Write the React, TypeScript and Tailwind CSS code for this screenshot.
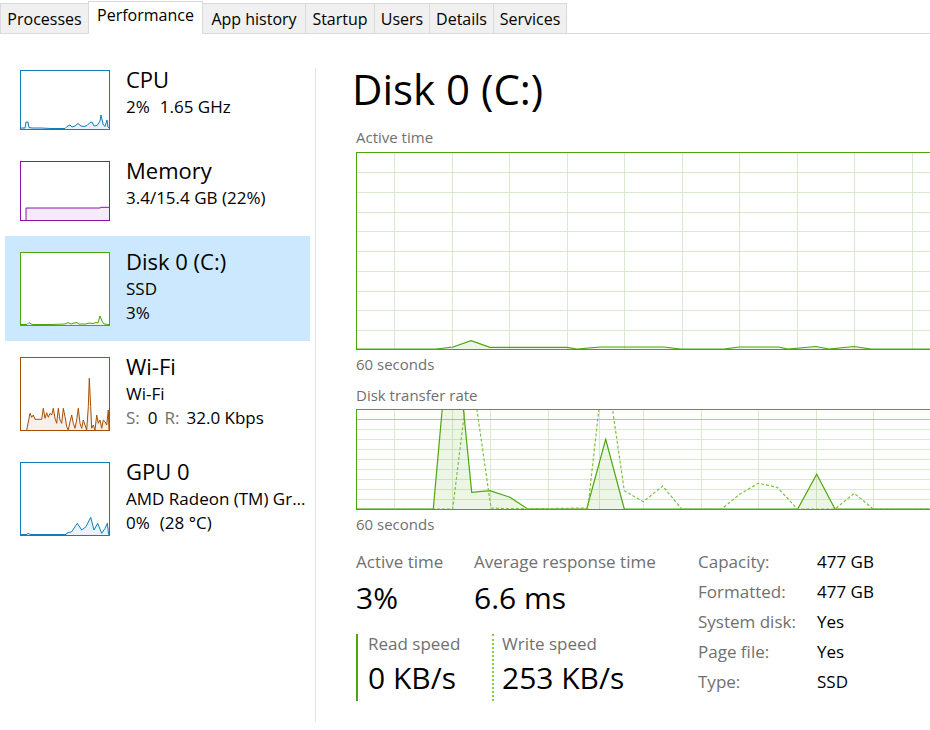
import React from 'react';
import clsx from 'clsx';

const tabs = [
  { label: 'Processes', w: 'w-[89px]' },
  { label: 'Performance', w: 'w-[115px]', active: true },
  { label: 'App history', w: 'w-[104px]' },
  { label: 'Startup', w: 'w-[70px]' },
  { label: 'Users', w: 'w-[56px]' },
  { label: 'Details', w: 'w-[65px]' },
  { label: 'Services', w: 'w-[74px]' },
];

const GRID = '#d9eacc';
const DISK = '#4da60c';

const MiniGraph = ({
  points,
  color,
  border,
  tall,
}: {
  points: string;
  color: string;
  border: string;
  tall?: boolean;
}) => {
  const h = tall ? 72 : 58;
  return (
    <div
      className={clsx(
        'w-[90px] shrink-0 border bg-white',
        tall ? 'h-[74px]' : 'h-[60px]',
        border
      )}
    >
      <svg
        viewBox={`0 0 88 ${h}`}
        preserveAspectRatio="none"
        className="block h-full w-full"
      >
        <polygon
          points={`0,${h} ${points} 88,${h}`}
          fill={color}
          fillOpacity={0.09}
        />
        <polyline points={points} fill="none" stroke={color} strokeWidth={1} />
      </svg>
    </div>
  );
};

const items = [
  {
    title: 'CPU',
    color: '#117dbb',
    border: 'border-[#117dbb]',
    points:
      '0,57 4,57 5,51 7,51 8,56.5 11,57 20,57 30,57.5 44,57.5 46,55.5 49,54 51,56 54,55 57,52.5 60,55 63,55.5 66,54.5 69,51.5 71,51 73,55 76,54.5 79,50 80,44 82,53 84,55.5 86,49 87,56 88,57',
    lines: [
      <>
        2%<span className="ml-[10px]">1.65 GHz</span>
      </>,
    ],
  },
  {
    title: 'Memory',
    color: '#8b12ae',
    border: 'border-[#8b12ae]',
    points: '5,58 5,46 79,46 80,45.3 88,45.3',
    lines: ['3.4/15.4 GB (22%)'],
  },
  {
    title: 'Disk 0 (C:)',
    color: '#4da60c',
    border: 'border-[#4da60c]',
    tall: true,
    selected: true,
    points:
      '0,71.5 6,71.5 8,69.5 10,71 12,71.5 30,71.5 44,71 47,69.5 50,71 53,70 56,69.5 58,71 65,71 68,70 72,70.5 75,69.5 77,70 79,63 81,68 83,71 88,71.5',
    lines: ['SSD', '3%'],
  },
  {
    title: 'Wi-Fi',
    color: '#a74f01',
    border: 'border-[#a74f01]',
    tall: true,
    points:
      '5.7,72 9,55.3 10.7,59.3 12.3,57 14,61.3 20.7,61.3 22.3,50.3 24,60.3 25.7,54.7 27.3,59.3 29,55.3 30.7,57 32.3,50.3 34,60.3 35.7,65.3 37.3,50.3 39,62 40.7,65.3 42.3,50.3 44,58.7 45.7,68.7 47.3,72 49,63.7 50.7,57 52.3,65.3 54,70.3 55.7,62 57.3,50.3 59,65.3 60.7,70.3 62.3,62 64,67 65.7,72 67.3,48.7 68.3,20.3 69.7,48.7 70.7,70.3 72.3,67 74,72 75.7,57 77.3,65.3 79,62 80.7,70.3 82.3,62 84,63.7 85.7,67 87.3,52 88,72',
    lines: [
      'Wi-Fi',
      <>
        <span className="text-[#707070]">S:</span>
        <span className="ml-[8px]">0</span>
        <span className="ml-[7px] text-[#707070]">R:</span>
        <span className="ml-[7px]">32.0 Kbps</span>
      </>,
    ],
  },
  {
    title: 'GPU 0',
    color: '#117dbb',
    border: 'border-[#117dbb]',
    tall: true,
    points:
      '0,71.5 6,71.5 7,70 9,71.5 45,71.5 46,70 50.7,68.7 56.3,60.3 60.7,67 65,63.7 69.7,54.3 73,67 76.7,60.3 80.7,70.3 84,65.3 86.3,60.3 87.7,71.5 88,71.5',
    lines: [
      'AMD Radeon (TM) Gr...',
      <>
        0%<span className="ml-[10px]">(28 °C)</span>
      </>,
    ],
  },
];

const Grid = ({
  xs,
  ys,
  h,
  strongY,
}: {
  xs: number[];
  ys: number[];
  h: number;
  strongY?: number;
}) => (
  <g shapeRendering="crispEdges">
    {xs.map((x) => (
      <line key={'x' + x} x1={x} x2={x} y1={0} y2={h} stroke={GRID} strokeWidth={1} />
    ))}
    {ys.map((y) => (
      <line key={'y' + y} x1={0} x2={598} y1={y} y2={y} stroke={GRID} strokeWidth={1} />
    ))}
    {strongY !== undefined && (
      <line x1={0} x2={598} y1={strongY} y2={strongY} stroke="#a3d48a" strokeWidth={1} />
    )}
  </g>
);

const activePoints =
  '0,196 79,196 96,194 114,187.7 133,194.3 210,194.3 220,196 243,194 307,194 323.6,196 367,196 382,194 421.5,194 431,196 459,193.5 472,196 497,193.5 514,196 598,196';

const readPoints =
  '0,99 76.3,99 85.3,-2 106.3,-2 114.7,82.3 133,80.7 153,87.3 170.7,99 229.7,99 248.7,29.3 267.3,99 440.7,99 459.7,64.3 478,99 598,99';

const writePoints =
  '0,99 95.7,99 108,-2 119.7,-2 134,98 146,98.5 196,98.5 226,98 230.7,99 242,-2 255.3,-2 267.3,80.7 286.3,91.7 305.7,76 324.7,99 364.7,99 383,84 401.3,73.3 420.3,77.3 440.3,99 478,99 497.3,83.3 516.3,99 598,99';

const ActiveTimeGraph = () => (
  <div className="mt-[5px] h-[198px] w-[600px] shrink-0 border border-[#4da60c] bg-white">
    <svg viewBox="0 0 598 196" className="block h-full w-full">
      <Grid
        xs={[37.5, 95.5, 152.5, 210.5, 267.5, 325.5, 382.5, 440.5, 497.5, 555.5]}
        ys={[19.5, 39.5, 59.5, 78.5, 98.5, 118.5, 138.5, 157.5, 177.5]}
        h={196}
      />
      <polygon points={`${activePoints} 598,196`} fill={DISK} fillOpacity={0.1} />
      <polyline points={activePoints} fill="none" stroke={DISK} strokeWidth={1.2} />
    </svg>
  </div>
);

const TransferGraph = () => (
  <div className="mt-[4px] h-[101px] w-[600px] shrink-0 border border-[#4da60c] bg-white">
    <svg viewBox="0 0 598 99" className="block h-full w-full">
      <Grid
        xs={[37.5, 95.5, 133.5, 191.5, 242.5, 286.5, 344.5, 401.5, 459.5, 516.5, 574.5]}
        ys={[19.5, 29.5, 39.5, 49.5, 59.5, 69.5, 79.5, 89.5]}
        h={99}
        strongY={9.5}
      />
      <polygon points={`${readPoints} 598,99`} fill={DISK} fillOpacity={0.1} />
      <polyline points={readPoints} fill="none" stroke={DISK} strokeWidth={1.2} />
      <polyline
        points={writePoints}
        fill="none"
        stroke="#7cc242"
        strokeWidth={1.2}
        strokeDasharray="3 2"
      />
    </svg>
  </div>
);

const details = [
  ['Capacity:', '477 GB'],
  ['Formatted:', '477 GB'],
  ['System disk:', 'Yes'],
  ['Page file:', 'Yes'],
  ['Type:', 'SSD'],
];

export default function App() {
  return (
    <div className="flex h-[730px] w-[930px] flex-col overflow-hidden bg-white font-['Open_Sans','Noto_Sans',sans-serif] text-black">
      <div className="flex h-[34px] shrink-0 items-end border-b border-[#d9d9d9]">
        {tabs.map((t, i) => (
          <div
            key={t.label}
            className={clsx(
              t.w,
              i > 0 && '-ml-px',
              t.active
                ? 'relative z-10 -mb-px h-[33px] bg-white pt-[3px]'
                : 'h-[30px] bg-[#f0f0f0] pt-[5px]',
              'shrink-0 whitespace-nowrap border-x border-t border-[#d9d9d9] text-center text-[16px] leading-[20px]'
            )}
          >
            {t.label}
          </div>
        ))}
      </div>

      <div className="flex flex-1">
        <div className="ml-[5px] w-[305px] shrink-0 pt-[20px]">
          {items.map((it) => (
            <div
              key={it.title}
              className={clsx(
                'flex items-start pb-[15px] pl-[15px] pt-[16px]',
                it.selected && 'bg-[#cce8ff]'
              )}
            >
              <MiniGraph
                points={it.points}
                color={it.color}
                border={it.border}
                tall={it.tall}
              />
              <div className="-mt-[6px] ml-[16px] min-w-0">
                <div className="mb-px text-[22px] leading-[30px]">{it.title}</div>
                {it.lines.map((l, i) => (
                  <div key={i} className="whitespace-nowrap text-[17px] leading-[24px]">
                    {l}
                  </div>
                ))}
              </div>
            </div>
          ))}
        </div>

        <div className="mb-[8px] ml-[5px] mt-[34px] w-px shrink-0 bg-[#e3e3e3]" />

        <div className="min-w-0 flex-1 pl-[40px] pt-[31px]">
          <div className="-ml-[4px] text-[42px] leading-[48px]">Disk 0 (C:)</div>

          <div className="mt-[14px] text-[15px] leading-[20px] text-[#707070]">Active time</div>
          <ActiveTimeGraph />
          <div className="mt-[4px] text-[15px] leading-[20px] text-[#707070]">60 seconds</div>

          <div className="mt-[11px] text-[15px] leading-[20px] text-[#707070]">
            Disk transfer rate
          </div>
          <TransferGraph />
          <div className="mt-[4px] text-[15px] leading-[20px] text-[#707070]">60 seconds</div>

          <div className="mt-[13px] flex">
            <div className="w-[342px] shrink-0">
              <div className="flex pt-[3px]">
                <div className="w-[118px] shrink-0">
                  <div className="text-[17px] leading-[24px] text-[#707070]">Active time</div>
                  <div className="mt-[4px] text-[30px] leading-[40px]">3%</div>
                </div>
                <div>
                  <div className="whitespace-nowrap text-[17px] leading-[24px] text-[#707070]">
                    Average response time
                  </div>
                  <div className="mt-[4px] text-[30px] leading-[40px]">6.6 ms</div>
                </div>
              </div>
              <div className="mt-[16px] flex">
                <div className="w-[136px] shrink-0 border-l-2 border-[#4da60c] pb-[3px] pl-[10px]">
                  <div className="text-[17px] leading-[20px] text-[#707070]">Read speed</div>
                  <div className="mt-[4px] whitespace-nowrap text-[30px] leading-[40px]">0 KB/s</div>
                </div>
                <div className="border-l-2 border-dotted border-[#84cc44] pb-[3px] pl-[8px]">
                  <div className="text-[17px] leading-[20px] text-[#707070]">Write speed</div>
                  <div className="mt-[4px] whitespace-nowrap text-[30px] leading-[40px]">253 KB/s</div>
                </div>
              </div>
            </div>

            <div className="flex flex-col">
              {details.map(([k, v]) => (
                <div key={k} className="flex text-[17px] leading-[30px]">
                  <div className="w-[119px] shrink-0 text-[#707070]">{k}</div>
                  <div>{v}</div>
                </div>
              ))}
            </div>
          </div>
        </div>
      </div>
    </div>
  );
}
